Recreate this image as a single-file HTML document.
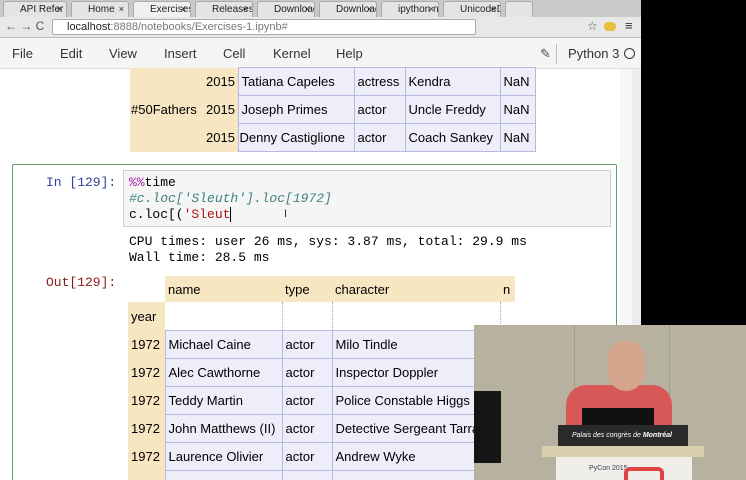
<!DOCTYPE html>
<html><head><meta charset="utf-8"><style>
*{margin:0;padding:0;box-sizing:border-box}
html,body{width:746px;height:480px;overflow:hidden}
body{background:#000;position:relative;font-family:"Liberation Sans",sans-serif}
.abs{position:absolute}
.tabs{left:0;top:0;width:641px;height:17px;background:#c9c9c9}
.tab{position:absolute;top:1px;height:16px;background:#e4e4e4;border:1px solid #aaa;border-bottom:none;border-radius:3px 3px 0 0;font-size:10px;line-height:15px;padding-left:16px;padding-right:12px;color:#222;white-space:nowrap;overflow:hidden}
.tab b{position:absolute;right:4px;top:0;font-weight:normal;font-size:9px}
.addr{left:0;top:17px;width:641px;height:21px;background:#e8e8e8;border-bottom:1px solid #bbb}
.url{position:absolute;left:52px;top:2px;width:424px;height:16px;background:#fff;border:1px solid #aaa;border-radius:2px;font-size:11px;line-height:14px;padding-left:14px;color:#777}
.menu{left:0;top:38px;width:641px;height:31px;background:#f5f5f5;border-bottom:1px solid #ddd;font-size:13px;color:#333}
.menu span{position:absolute;top:8px}
.nb{left:0;top:69px;width:641px;height:411px;background:#f7f7f7}
.page{left:0;top:69px;width:620px;height:411px;background:#fff}
table{table-layout:fixed;border-collapse:collapse}
td{font-size:13px;color:#000;height:28px;padding:0 3px;white-space:nowrap;overflow:hidden}
.idx{background:#f6e6c2}
.d{background:#eeeefa;border:1px solid #b8b8e0}
.mono{font-family:"Liberation Mono",monospace;font-size:12.5px}
</style></head><body>
<div class="abs tabs">
 <div class="tab" style="left:3px;width:64px">API Refer<b>×</b></div>
 <div class="tab" style="left:71px;width:58px">Home<b>×</b></div>
 <div class="tab" style="left:133px;width:58px;background:#f0f0f0">Exercises<b>×</b></div>
 <div class="tab" style="left:195px;width:58px">Releases<b>×</b></div>
 <div class="tab" style="left:257px;width:58px">Downloac<b>×</b></div>
 <div class="tab" style="left:319px;width:58px">Downloac<b>×</b></div>
 <div class="tab" style="left:381px;width:58px">ipython n<b>×</b></div>
 <div class="tab" style="left:443px;width:58px">UnicodeD<b>×</b></div>
 <div class="tab" style="left:505px;width:28px;padding:0"></div>
</div>
<div class="abs addr">
 <span class="abs" style="left:5px;top:2px;font-size:12px;color:#555">← → C</span>
 <div class="url"><span style="color:#222">localhost</span>:8888/notebooks/Exercises-1.ipynb#</div>
 <span class="abs" style="left:587px;top:2px;font-size:12px;color:#555">☆</span>
 <span class="abs" style="left:604px;top:5px;width:12px;height:9px;background:#e8c040;border-radius:4px"></span>
 <span class="abs" style="left:625px;top:1px;font-size:13px;color:#333">≡</span>
</div>
<div class="abs menu">
 <span style="left:12px">File</span><span style="left:60px">Edit</span><span style="left:109px">View</span><span style="left:164px">Insert</span><span style="left:223px">Cell</span><span style="left:273px">Kernel</span><span style="left:336px">Help</span>
 <span style="left:540px;color:#555">✎</span>
 <span style="left:556px;top:6px;width:1px;height:20px;background:#bbb"></span>
 <span style="left:568px">Python 3</span>
 <span style="left:624px;top:10px;width:11px;height:11px;border:1.5px solid #333;border-radius:50%"></span>
</div>
<div class="abs nb"></div>
<div class="abs page"></div>
<table class="abs" style="left:130px;top:67px;width:405px">
<col style="width:73px"><col style="width:35px"><col style="width:116px"><col style="width:51px"><col style="width:95px"><col style="width:35px">
<tr><td class="idx"></td><td class="idx" style="text-align:right">2015</td><td class="d">Tatiana Capeles</td><td class="d">actress</td><td class="d">Kendra</td><td class="d">NaN</td></tr>
<tr><td class="idx" style="padding:0 1px">#50Fathers</td><td class="idx" style="text-align:right">2015</td><td class="d">Joseph Primes</td><td class="d">actor</td><td class="d">Uncle Freddy</td><td class="d">NaN</td></tr>
<tr><td class="idx"></td><td class="idx" style="text-align:right">2015</td><td class="d" style="padding:0 1px">Denny Castiglione</td><td class="d">actor</td><td class="d">Coach Sankey</td><td class="d">NaN</td></tr>
</table>
<div class="abs" style="left:12px;top:164px;width:605px;height:340px;border:1px solid #66a066;border-radius:2px;background:#fff"></div>
<div class="abs" style="left:123px;top:170px;width:488px;height:57px;background:#f5f5f5;border:1px solid #d0d0d0"></div>
<div class="abs mono" style="left:46px;top:175px;color:#303f9f;font-size:13px">In [129]:</div>
<div class="abs mono" style="left:129px;top:175px;line-height:16px;color:#000;font-size:13px">
<span style="color:#a020a0">%%</span>time<br><i style="color:#408080">#c.loc['Sleuth'].loc[1972]</i><br>c.loc[(<span style="color:#a11">'Sleut</span><span style="border-left:1px solid #000"></span>
</div>
<div class="abs" style="left:284px;top:208px;font-size:11px;color:#333">I</div>
<div class="abs mono" style="left:129px;top:234px;line-height:16px;font-size:13px">CPU times: user 26 ms, sys: 3.87 ms, total: 29.9 ms<br>Wall time: 28.5 ms</div>
<div class="abs mono" style="left:46px;top:275px;color:#8b1a1a;font-size:13px">Out[129]:</div>
<table class="abs" style="left:128px;top:276px;width:387px">
<col style="width:37px"><col style="width:117px"><col style="width:50px"><col style="width:168px"><col style="width:15px">
<tr><td style="height:26px"></td><td class="idx" style="height:26px">name</td><td class="idx" style="height:26px">type</td><td class="idx" style="height:26px">character</td><td class="idx" style="height:26px">n</td></tr>
<tr><td class="idx">year</td><td style="border-right:1px dotted #aaa"></td><td style="border-right:1px dotted #aaa"></td><td style="border-right:1px dotted #aaa"></td><td></td></tr>
<tr><td class="idx">1972</td><td class="d">Michael Caine</td><td class="d">actor</td><td class="d">Milo Tindle</td><td class="d"></td></tr>
<tr><td class="idx">1972</td><td class="d">Alec Cawthorne</td><td class="d">actor</td><td class="d">Inspector Doppler</td><td class="d"></td></tr>
<tr><td class="idx">1972</td><td class="d">Teddy Martin</td><td class="d">actor</td><td class="d">Police Constable Higgs</td><td class="d"></td></tr>
<tr><td class="idx">1972</td><td class="d">John Matthews (II)</td><td class="d">actor</td><td class="d">Detective Sergeant Tarrant</td><td class="d"></td></tr>
<tr><td class="idx">1972</td><td class="d">Laurence Olivier</td><td class="d">actor</td><td class="d">Andrew Wyke</td><td class="d"></td></tr>
<tr><td class="idx">1972</td><td class="d"></td><td class="d"></td><td class="d"></td><td class="d"></td></tr>
</table>
<div class="abs" style="left:632px;top:69px;width:9px;height:256px;background:#ececec"></div>
<div class="abs" style="left:474px;top:325px;width:272px;height:155px;background:#b6b29f;overflow:hidden">
 <div class="abs" style="left:100px;top:0;width:1px;height:155px;background:#a29e8c"></div>
 <div class="abs" style="left:195px;top:0;width:1px;height:155px;background:#a29e8c"></div>
 <div class="abs" style="left:0;top:66px;width:27px;height:72px;background:#151515"></div>
 <div class="abs" style="left:92px;top:60px;width:106px;height:50px;background:#d85858;border-radius:20px 20px 0 0"></div>
 <div class="abs" style="left:134px;top:16px;width:36px;height:50px;background:#d4a58c;border-radius:16px 16px 18px 18px"></div>
 <div class="abs" style="left:108px;top:83px;width:72px;height:22px;background:#111"></div>
 <div class="abs" style="left:84px;top:100px;width:130px;height:22px;background:#2a2a2a;color:#fff;font-size:7px;line-height:22px;padding-left:14px;font-style:italic">Palais des congrès de <b>Montréal</b></div>
 <div class="abs" style="left:68px;top:121px;width:162px;height:11px;background:#d8cfae"></div>
 <div class="abs" style="left:82px;top:132px;width:136px;height:23px;background:#efeee8"></div>
 <div class="abs" style="left:115px;top:140px;font-size:7px;color:#345">PyCon 2015</div>
 <div class="abs" style="left:150px;top:142px;width:40px;height:13px;border:4px solid #d44;border-bottom:none;border-radius:6px 6px 0 0"></div>
</div>
</body></html>
